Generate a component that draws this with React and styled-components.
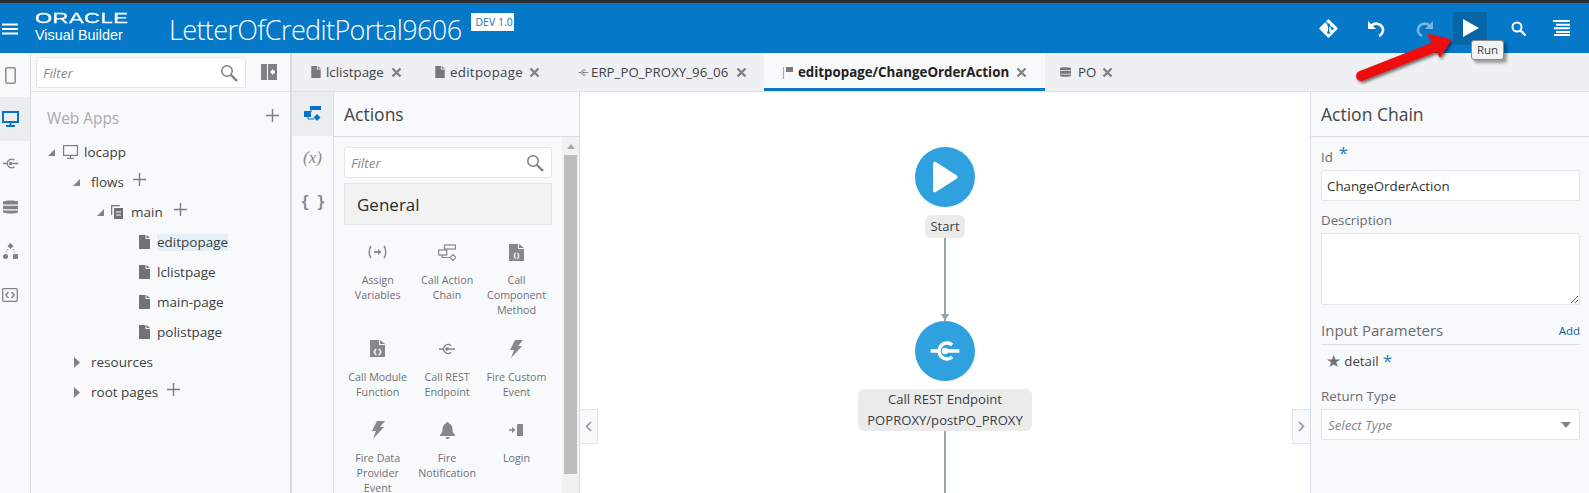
import React from "react";
import styled, { createGlobalStyle } from "styled-components";
import { FaGitAlt } from "react-icons/fa";

const Global = createGlobalStyle`
  html, body { margin: 0; padding: 0; height: 493px; overflow: hidden; background: #fff; }
  body { font-family: "Open Sans", "Noto Sans", sans-serif; color: #333; }
  * { box-sizing: border-box; }
`;

const Page = styled.div`
  width: 1589px; height: 493px; display: flex; flex-direction: column;
  overflow: hidden; position: relative; border-top: 3px solid #2b2f33;
`;

/* header */
const Header = styled.header`
  height: 50px; flex: none; background: #0579c8; display: flex; align-items: center; color: #fff;
  padding-left: 2px;
`;
const Burger = styled.svg`width: 17px; height: 12px; margin-right: 16px; margin-top: 1px;`;
const Logo = styled.div`width: 134px; display: flex; flex-direction: column; font-family: "Liberation Sans", sans-serif; margin-top: -3px;`;
const LogoTop = styled.span`
  font-size: 15px; line-height: 15px; font-weight: 400; letter-spacing: .3px; -webkit-text-stroke: .3px #fff;
  transform: scaleX(1.47); transform-origin: left center; display: block;
`;
const LogoBottom = styled.span`font-size: 14.4px; line-height: 16px; margin-top: 2px;`;
const AppTitle = styled.h1`
  margin: 3px 0 0; font-size: 27px; font-weight: 300; line-height: 40px; letter-spacing: -.62px; white-space: nowrap;
`;
const Badge = styled.span`
  margin: -13px 0 0 10px; background: #fff; color: #1c6fb0; font-size: 10.5px; line-height: 18px; padding: 0 4px; width: 43px; white-space: nowrap;
`;
const HeadActions = styled.div`margin-left: auto; display: flex; align-items: center; height: 100%; padding-right: 10px;`;
const HeadBtn = styled.div`
  width: ${p => p.$w || 48}px; height: 33px; display: flex; align-items: center; justify-content: center;
  border-radius: 2px; background: ${p => (p.$active ? "#0766a8" : "transparent")};
  opacity: ${p => (p.$dim ? 0.45 : 1)}; margin-left: ${p => p.$ml || 0}px;
`;
const Tooltip = styled.div`
  position: absolute; left: 1471px; top: 37px; width: 33px; height: 20px; background: #f3f3f3;
  border: 1px solid #8a8a8a; border-radius: 3px; font-size: 11.5px; line-height: 18px; text-align: center;
  color: #444; box-shadow: 3px 3px 3px rgba(0,0,0,.35);
`;
const ArrowOverlay = styled.svg`position: absolute; left: 1340px; top: 18px; width: 120px; height: 70px; pointer-events: none;`;

/* body */
const Body = styled.div`flex: 1; display: flex; min-height: 0;`;
const Rail = styled.nav`width: 31px; flex: none; background: #f8f9fb; border-right: 1px solid #d6dfe6;`;
const RailBtn = styled.div`
  height: 44px; display: flex; align-items: center; justify-content: center; padding-right: 10px;
  background: ${p => (p.$active ? "#ecedef" : "transparent")}; color: ${p => (p.$active ? "#0572ce" : "#7f8488")};
`;

const TreePanel = styled.aside`width: 261px; flex: none; background: #f8f9fb; border-right: 2px solid #d6dbe0; display: flex; flex-direction: column;`;
const FilterBar = styled.div`height: 39px; flex: none; display: flex; align-items: flex-start; padding: 4px 0 0 5px; border-bottom: 1px solid #dfe4e9;`;
const FilterBox = styled.label`
  display: flex; align-items: center; height: ${p => p.$h || 31}px; width: ${p => p.$w}px; background: #fff;
  border: 1px solid #e4e6e8; border-radius: 2px; padding: 0 7px 0 6px; flex: none; color: #7c8085;
`;
const FilterInput = styled.input`
  flex: 1; min-width: 0; border: 0; outline: 0; background: transparent; font: italic 13.5px "Open Sans", sans-serif; color: #777; padding: 0;
  &::placeholder { color: #85888c; opacity: 1; }
`;
const CollapseIcon = styled.svg`width: 16px; height: 16px; margin: 7px 0 0 15px;`;
const Tree = styled.div`padding: 12px 0 0 16px; position: relative; flex: 1;`;
const TreeHead = styled.div`
  display: flex; justify-content: space-between; align-items: center; height: 28px; margin-bottom: 5px;
  font-size: 15.4px; color: #a9abae; padding-right: 10px;
`;
const TreeRow = styled.div`
  height: 30px; display: flex; align-items: center; padding-left: ${p => p.$indent}px; font-size: 13.5px; color: #3c3f42; white-space: nowrap;
`;
const Twist = styled.svg`width: 9px; height: 11px; flex: none; margin-right: ${p => p.$mr || 10}px;`;
const TreeIcon = styled.svg`flex: none; margin-right: ${p => p.$mr || 6}px; color: #707276;`;
const TreeLabel = styled.span`
  background: ${p => (p.$sel ? "#e3f0f8" : "transparent")}; line-height: 17px;
`;
const PlusBtn = styled.svg`width: 15px; height: 15px; margin-left: ${p => p.$ml || 8}px; color: #7b7e82; flex: none; margin-top: -5px;`;

/* workspace */
const Workspace = styled.main`flex: 1; min-width: 0; display: flex; flex-direction: column;`;
const Tabs = styled.div`height: 39px; flex: none; display: flex; background: #eef0f3; border-bottom: 1px solid #dfe4e9;`;
const Tab = styled.div`
  width: ${p => p.$w}px; display: flex; align-items: center; padding-left: ${p => p.$pl || 19}px; font-size: 13.3px; white-space: nowrap;
  color: ${p => (p.$active ? "#222" : "#3f4246")}; font-weight: ${p => (p.$active ? 700 : 400)};
  background: ${p => (p.$active ? "#f8f9fb" : "transparent")};
  box-shadow: ${p => (p.$active ? "inset 0 -3px 0 #0579c8" : "none")};
`;
const TabIcon = styled.svg`flex: none; margin-right: ${p => p.$mr || 5}px; color: #77797d;`;
const WideName = styled.span`letter-spacing: ${p => p.$ls}px;`;
const TabClose = styled.svg`width: 11px; height: 11px; flex: none; margin-left: ${p => p.$ml || 7}px; color: #7f8285;`;

const Split = styled.div`flex: 1; display: flex; min-height: 0;`;
const PaletteTabs = styled.div`width: 42px; flex: none; background: #f8f9fb; border-right: 1px solid #d6dfe6;`;
const PaletteTab = styled.div`
  height: 44px; display: flex; align-items: center; justify-content: center; color: ${p => (p.$active ? "#0572ce" : "#85888c")};
  background: ${p => (p.$active ? "#ecedef" : "transparent")}; font: 400 17px "Liberation Serif", serif;
`;
const Braces = styled(PaletteTab)`font: 700 15px "DejaVu Sans Mono", monospace; letter-spacing: -1px;`;
const ActionsPanel = styled.section`width: 246px; flex: none; background: #f8f9fb; border-right: 1px solid #d6dfe6; display: flex; flex-direction: column; min-height: 0;`;
const PanelTitle = styled.div`
  height: 45px; flex: none; border-bottom: 1px solid #d6dfe6; font-size: 17.5px; color: #444; padding-left: 10px; display: flex; align-items: center;
`;
const ActionsBody = styled.div`flex: 1; display: flex; min-height: 0;`;
const ActionsContent = styled.div`flex: 1; min-width: 0; padding: 10px 10px 0 10px; overflow: hidden;`;
const Accordion = styled.div`
  margin-top: 5px; height: 42px; width: 208px; background: #f2f2f2; border: 1px solid #e3e4e6; display: flex; align-items: center; padding-left: 12px; font-size: 17px; color: #2a2a2a;
`;
const PaletteGrid = styled.div`display: grid; grid-template-columns: repeat(3, 69.4px); row-gap: 18.5px; margin-top: 15px; width: 208px; margin-left: -1px;`;
const PaletteItem = styled.div`display: flex; flex-direction: column; align-items: center; text-align: center; color: #6f7276;`;
const PaletteIcon = styled.div`height: 24px; display: flex; align-items: center; justify-content: center; margin-bottom: 9px; color: #85888c;`;
const PaletteLabel = styled.div`font-size: 10.7px; line-height: 15px; white-space: pre-line;`;
const Scrollbar = styled.div`width: 17px; flex: none; background: #f1f1f1; display: flex; flex-direction: column; align-items: center;`;
const ScrollUp = styled.div`height: 18px; flex: none; padding-top: 7px; &::before { content: ""; display: block; border: 4px solid transparent; border-top: 0; border-bottom: 5px solid #a8a8a8; }`;
const ScrollThumb = styled.div`width: 13px; height: 319px; background: #bdbdbd; flex: none;`;

const Canvas = styled.section`flex: 1; min-width: 0; background: #fff; display: flex; flex-direction: column; align-items: center; padding-top: 55px; overflow: hidden; position: relative;`;
const NodeCircle = styled.div`width: 60px; height: 60px; flex: none; border-radius: 50%; background: #30a1df; display: flex; align-items: center; justify-content: center;`;
const NodeLabel = styled.div`
  margin-top: 8px; background: #ebebeb; border-radius: 6px; padding: 0 ${p => p.$px || 5}px; font-size: 13.1px; line-height: ${p => p.$lh || 23}px; text-align: center; color: #3b3d40; white-space: pre-line; flex: none;
`;
const Connector = styled.div`
  width: 2px; height: ${p => p.$h}px; background: #98a4ae; flex: none; position: relative;
  &::after { content: ""; position: absolute; left: -3px; bottom: 0; border: 4px solid transparent; border-bottom: 0; border-top: 7px solid #98a4ae; }
`;
const Gutter = styled.div`
  position: absolute; top: 317px; width: 18px; height: 35px; background: #f8f9fb; border: 1px solid #e2e5e8; color: #909397; display: flex; align-items: center; justify-content: center;
  ${p => (p.$right ? "right: 0; border-right: 0;" : "left: 0; border-left: 0;")}
`;

const PropsPanel = styled.aside`width: 279px; flex: none; background: #f8f9fb; border-left: 1px solid #d6dfe6; display: flex; flex-direction: column;`;
const PropsBody = styled.div`padding: 10px 9px 0 10px;`;
const FieldLabel = styled.div`font-size: 13.3px; line-height: 20px; color: #6a6d70; margin-top: ${p => p.$mt || 0}px; height: 20px;`;
const Required = styled.span`color: #2a78c0; font-size: 17px; line-height: 0; margin-left: ${p => p.$ml || 6}px; vertical-align: 3px;`;
const TextField = styled.input`
  display: block; width: 259px; height: 31px; margin-top: 3px; border: 1px solid #e4e6e8; border-radius: 2px; background: #fff; padding: 0 5px;
  font: 13.3px "Open Sans", sans-serif; color: #333; outline: 0;
`;
const TextArea = styled.textarea`
  display: block; width: 259px; height: 72px; margin-top: 3px; border: 1px solid #e4e6e8; border-radius: 2px; background: #fff; outline: 0; resize: both;
`;
const SectionRow = styled.div`display: flex; justify-content: space-between; align-items: center; height: 27px; margin-top: 13px; border-bottom: 1px solid #d6dfe6; padding-bottom: 2px;`;
const SectionTitle = styled.span`font-size: 15px; color: #6a6d70;`;
const AddLink = styled.span`font-size: 11.5px; color: #145c9e;`;
const ParamRow = styled.div`height: 34px; display: flex; align-items: center; padding-left: 5px; font-size: 13.3px; color: #444; padding-bottom: 2px;`;
const ParamStar = styled.span`color: #707276; font-size: 17px; margin-right: 3px; font-family: "DejaVu Sans", sans-serif;`;
const SelectBox = styled(FilterBox)`width: 259px; margin-top: 3px; padding: 0 6px;`;
const SelectText = styled.span`font: italic 13.3px "Open Sans", sans-serif; color: #85888c; flex: 1;`;
const Caret = styled.span`border: 5px solid transparent; border-bottom: 0; border-top: 6px solid #808285; margin-right: 2px;`;

/* icons */
const Plus = ({ $ml }) => (
  <PlusBtn $ml={$ml} viewBox="0 0 15 15"><path d="M7.5 1v13M1 7.5h13" stroke="currentColor" strokeWidth="1.4" /></PlusBtn>
);
const Down = () => <Twist viewBox="0 0 9 11"><path d="M8 2v7H1z" fill="#808285" /></Twist>;
const Right = () => <Twist viewBox="0 0 9 11"><path d="M2 0l6 5.5L2 11z" fill="#808285" /></Twist>;
const PageGlyph = ({ w = 11, h = 14, mr }) => (
  <TreeIcon $mr={mr} width={w} height={h} viewBox="0 0 11 14"><path d="M0 0h6.5v4H11v10H0zM7.5 0L11 3H7.5z" fill="currentColor" /></TreeIcon>
);
const TabPage = () => (
  <TabIcon width="10" height="12" viewBox="0 0 11 14"><path d="M0 0h6.5v4H11v10H0zM7.5 0L11 3H7.5z" fill="currentColor" /></TabIcon>
);
const X = ({ ml }) => <TabClose $ml={ml} viewBox="0 0 11 11"><path d="M1.5 1.5l8 8M9.5 1.5l-8 8" stroke="currentColor" strokeWidth="2.4" /></TabClose>;
const Mag = ({ size = 18 }) => (
  <svg width={size} height={size} viewBox="0 0 18 18" fill="none"><circle cx="7" cy="7" r="5.2" stroke="#7c8085" strokeWidth="1.5" /><path d="M11 11l6 6" stroke="#7c8085" strokeWidth="2.4" /></svg>
);
const RestPaths = ({ color = "currentColor", sw = 1.6 }) => (
  <>
    <path d="M14.5 6.2A5 5 0 1 0 14.5 13.8" stroke={color} strokeWidth={sw} fill="none" /><circle cx="10" cy="10" r="2" fill={color} />
    <path d="M1 10h5M10 10h9" stroke={color} strokeWidth={sw} fill="none" />
  </>
);
const RestGlyph = ({ size = 18, color, sw }) => (
  <svg width={size} height={size} viewBox="0 0 20 20"><RestPaths color={color} sw={sw} /></svg>
);
const ChainGlyph = () => (
  <svg width="18" height="17" viewBox="0 0 18 17" fill="none" stroke="currentColor" strokeWidth="1.2">
    <rect x="6.5" y="1" width="11" height="4" /><rect x=".7" y="6" width="8" height="5" /><path d="M8.5 5v1M4 11v2.5h8" /><path d="M15 10.5l3 3-3 3-3-3z" />
  </svg>
);
const CodeDoc = ({ glyph }) => (
  <svg width="15" height="17" viewBox="0 0 15 17"><path d="M0 0h9v5h6v12H0zM10 0l5 4h-5z" fill="currentColor" /><text x="7.5" y="14" fontSize="7" fontWeight="700" fill="#fff" textAnchor="middle" fontFamily="DejaVu Sans">{glyph}</text></svg>
);
const Bolt = () => (
  <svg width="14" height="18" viewBox="0 0 14 18"><path d="M6 0h8L9 6h4L2 18l3-8H1z" fill="currentColor" /></svg>
);
const ActionChainIcon = () => (
  <svg width="17" height="16" viewBox="0 0 17 16" fill="currentColor"><rect x="6" y="0" width="11" height="4" /><rect x="0" y="5" width="7" height="6" /><path d="M7 3v3M4 11v2h6" stroke="currentColor" fill="none" /><path d="M13 8l3.5 3.5L13 15l-3.5-3.5z" /></svg>
);

export default function App() {
  return (
    <Page>
      <Global />
      <Header>
        <Burger viewBox="0 0 17 12"><path d="M0 1.5h16M0 6h16M0 10.5h16" stroke="#fff" strokeWidth="1.8" /></Burger>
        <Logo>
          <LogoTop>ORACLE</LogoTop>
          <LogoBottom>Visual Builder</LogoBottom>
        </Logo>
        <AppTitle>LetterOfCreditPortal9606</AppTitle>
        <Badge>DEV 1.0</Badge>
        <HeadActions>
          <HeadBtn><FaGitAlt size={21} color="#fff" /></HeadBtn>
          <HeadBtn>
            <svg width="19" height="17" viewBox="0 0 19 17" fill="none"><path d="M1 1v8h8z" fill="#fff" /><path d="M4 6a7 7 0 0 1 11.5 1.5C17 11 15 14.5 12 16" stroke="#fff" strokeWidth="2.6" /></svg>
          </HeadBtn>
          <HeadBtn $dim>
            <svg width="19" height="17" viewBox="0 0 19 17" fill="none"><path d="M18 1v8h-8z" fill="#fff" /><path d="M15 6A7 7 0 0 0 3.5 7.5C2 11 4 14.5 7 16" stroke="#fff" strokeWidth="2.6" /></svg>
          </HeadBtn>
          <HeadBtn $active $w={34} $ml={5}>
            <svg width="17" height="18" viewBox="0 0 17 18"><path d="M1 0l16 9-16 9z" fill="#fff" /></svg>
          </HeadBtn>
          <HeadBtn $w={49} $ml={7}>
            <svg width="15" height="15" viewBox="0 0 15 15" fill="none"><circle cx="6" cy="6" r="4.5" stroke="#fff" strokeWidth="2" /><path d="M9.5 9.5l5 5" stroke="#fff" strokeWidth="2.4" /></svg>
          </HeadBtn>
          <HeadBtn $w={36}>
            <svg width="17" height="16" viewBox="0 0 17 16"><path d="M0 1h17M3 4.7h14M1 8.3h16M3 12h14M1 15h16" stroke="#fff" strokeWidth="1.9" /></svg>
          </HeadBtn>
        </HeadActions>
      </Header>

      <Body>
        <Rail>
          <RailBtn>
            <svg width="11" height="17" viewBox="0 0 11 17" fill="none"><rect x=".8" y=".8" width="9.4" height="15.4" rx="1.5" stroke="#9a8f86" strokeWidth="1.6" /></svg>
          </RailBtn>
          <RailBtn $active>
            <svg width="17" height="16" viewBox="0 0 17 16" fill="none"><rect x="1" y="1" width="15" height="10" stroke="#0572ce" strokeWidth="2" /><path d="M8.5 11v3M4 15h9" stroke="#0572ce" strokeWidth="1.8" /></svg>
          </RailBtn>
          <RailBtn><RestGlyph size={17} /></RailBtn>
          <RailBtn>
            <svg width="15" height="16" viewBox="0 0 15 16" fill="#7f8488"><path d="M0 3c0-2 15-2 15 0v2.5H0zM0 6.7h15v3.6H0zM0 11.5h15V13c0 2-15 2-15 0z" /></svg>
          </RailBtn>
          <RailBtn>
            <svg width="15" height="17" viewBox="0 0 15 17" fill="#7f8488"><path d="M7.5 0l3 3-3 3-3-3z" /><circle cx="2.5" cy="13.5" r="2.5" /><rect x="10" y="11" width="5" height="5" rx="1" /><path d="M5 6l-2 4M10 6l2 4" stroke="#7f8488" strokeDasharray="1.4 1.2" fill="none" /></svg>
          </RailBtn>
          <RailBtn>
            <svg width="16" height="14" viewBox="0 0 16 14" fill="none" stroke="#7f8488"><rect x=".7" y=".7" width="14.6" height="12.6" rx="1" strokeWidth="1.3" /><path d="M6.5 4L3.8 7l2.7 3M9.5 4l2.7 3-2.7 3" strokeWidth="1.4" /></svg>
          </RailBtn>
        </Rail>

        <TreePanel>
          <FilterBar>
            <FilterBox $w={210}>
              <FilterInput placeholder="Filter" readOnly />
              <Mag />
            </FilterBox>
            <CollapseIcon viewBox="0 0 16 16"><path d="M0 0h6v16H0zM7 0h9v16H7z" fill="#808285" /><path d="M9 8l3-3v6z" fill="#fff" /><rect x="11" y="6.5" width="3" height="3" fill="#fff" /></CollapseIcon>
          </FilterBar>
          <Tree>
            <TreeHead>Web Apps <PlusBtn viewBox="0 0 15 15"><path d="M7.5 1v13M1 7.5h13" stroke="currentColor" strokeWidth="1.4" /></PlusBtn></TreeHead>
            <TreeRow $indent={0}>
              <Twist viewBox="0 0 9 11" $mr={7}><path d="M8 2v7H1z" fill="#808285" /></Twist>
              <TreeIcon $mr={6} width="15" height="14" viewBox="0 0 15 14" fill="none"><rect x=".6" y=".6" width="13.8" height="9.8" stroke="currentColor" strokeWidth="1.1" /><path d="M7.5 10.5v2.5M4 13.2h7" stroke="currentColor" strokeWidth="1.1" /></TreeIcon>
              <TreeLabel>locapp</TreeLabel>
            </TreeRow>
            <TreeRow $indent={25}><Down /><TreeLabel>flows</TreeLabel><Plus $ml={8} /></TreeRow>
            <TreeRow $indent={49}>
              <Twist viewBox="0 0 9 11" $mr={6}><path d="M8 2v7H1z" fill="#808285" /></Twist>
              <TreeIcon $mr={8} width="12" height="14" viewBox="0 0 12 14" fill="none"><path d="M.7 10V.7h8" stroke="currentColor" strokeWidth="1.2" /><rect x="3" y="3" width="9" height="11" fill="currentColor" /><path d="M5 7h5M5 10h5" stroke="#f8f9fb" /></TreeIcon>
              <TreeLabel>main</TreeLabel><Plus $ml={10} />
            </TreeRow>
            <TreeRow $indent={92}><PageGlyph mr={7} /><TreeLabel $sel>editpopage</TreeLabel></TreeRow>
            <TreeRow $indent={92}><PageGlyph mr={7} /><TreeLabel>lclistpage</TreeLabel></TreeRow>
            <TreeRow $indent={92}><PageGlyph mr={7} /><TreeLabel>main-page</TreeLabel></TreeRow>
            <TreeRow $indent={92}><PageGlyph mr={7} /><TreeLabel>polistpage</TreeLabel></TreeRow>
            <TreeRow $indent={25}><Right /><TreeLabel>resources</TreeLabel></TreeRow>
            <TreeRow $indent={25}><Right /><TreeLabel>root pages</TreeLabel><Plus $ml={8} /></TreeRow>
          </Tree>
        </TreePanel>

        <Workspace>
          <Tabs>
            <Tab $w={124}><TabPage />lclistpage<X /></Tab>
            <Tab $w={143}><TabPage /><WideName $ls={0.3}>editpopage</WideName><X ml={6} /></Tab>
            <Tab $w={205}><TabIcon $mr={2} width="11" height="11" viewBox="0 0 20 20"><RestPaths /></TabIcon><WideName $ls={0}>ERP_PO_PROXY_96_06</WideName><X ml={8} /></Tab>
            <Tab $w={281} $active $pl={18}>
              <TabIcon width="11" height="13" viewBox="0 0 11 13"><path d="M4 1h7v5H4z" fill="currentColor" /><path d="M1.5 1v12" stroke="#c9a0a0" strokeWidth="1.2" /></TabIcon>
              editpopage/ChangeOrderAction<X />
            </Tab>
            <Tab $w={90} $pl={15}>
              <TabIcon $mr={7} width="11" height="12" viewBox="0 0 15 16" fill="currentColor"><path d="M0 3c0-2 15-2 15 0v2.5H0zM0 6.7h15v3.6H0zM0 11.5h15V13c0 2-15 2-15 0z" /></TabIcon>
              PO<X ml={6} />
            </Tab>
          </Tabs>
          <Split>
            <PaletteTabs>
              <PaletteTab $active><ActionChainIcon /></PaletteTab>
              <PaletteTab><i>(x)</i></PaletteTab>
              <Braces>{"{ }"}</Braces>
            </PaletteTabs>
            <ActionsPanel>
              <PanelTitle>Actions</PanelTitle>
              <ActionsBody>
                <ActionsContent>
                  <FilterBox $w={208}>
                    <FilterInput placeholder="Filter" readOnly />
                    <Mag />
                  </FilterBox>
                  <Accordion>General</Accordion>
                  <PaletteGrid>
                    <PaletteItem><PaletteIcon><svg width="19" height="14" viewBox="0 0 19 14" fill="none" stroke="currentColor" strokeWidth="1.5"><path d="M3 1C.7 4 .7 10 3 13M16 1c2.3 3 2.3 9 0 12" /><path d="M6 7h5" strokeWidth="1.8" /><path d="M10 4l3.5 3L10 10z" fill="currentColor" stroke="none" /></svg></PaletteIcon><PaletteLabel>{"Assign\nVariables"}</PaletteLabel></PaletteItem>
                    <PaletteItem><PaletteIcon><ChainGlyph /></PaletteIcon><PaletteLabel>{"Call Action\nChain"}</PaletteLabel></PaletteItem>
                    <PaletteItem><PaletteIcon><CodeDoc glyph="()" /></PaletteIcon><PaletteLabel>{"Call\nComponent\nMethod"}</PaletteLabel></PaletteItem>
                    <PaletteItem><PaletteIcon><CodeDoc glyph="{}" /></PaletteIcon><PaletteLabel>{"Call Module\nFunction"}</PaletteLabel></PaletteItem>
                    <PaletteItem><PaletteIcon><RestGlyph size={18} /></PaletteIcon><PaletteLabel>{"Call REST\nEndpoint"}</PaletteLabel></PaletteItem>
                    <PaletteItem><PaletteIcon><Bolt /></PaletteIcon><PaletteLabel>{"Fire Custom\nEvent"}</PaletteLabel></PaletteItem>
                    <PaletteItem><PaletteIcon><Bolt /></PaletteIcon><PaletteLabel>{"Fire Data\nProvider\nEvent"}</PaletteLabel></PaletteItem>
                    <PaletteItem><PaletteIcon><svg width="15" height="17" viewBox="0 0 15 17" fill="currentColor"><path d="M7.5 0c1 0 1.4.7 1.4 1.5C11.5 2.2 12.5 4.5 12.5 7.500c0 2.500.8 4 2.500 5.500v1H0v-1c1.700-1.500 2.500-3 2.500-5.500 0-3 1-5.300 3.600-6C6.100.7 6.500 0 7.500 0zM5.500 15h4c0 1-1 2-2 2s-2-1-2-2z" /></svg></PaletteIcon><PaletteLabel>{"Fire\nNotification"}</PaletteLabel></PaletteItem>
                    <PaletteItem><PaletteIcon><svg width="14" height="12" viewBox="0 0 14 12" fill="currentColor"><path d="M8 0h6v12H8zM0 5.200h3V3l3.500 3L3 9V6.800H0z" /></svg></PaletteIcon><PaletteLabel>Login</PaletteLabel></PaletteItem>
                  </PaletteGrid>
                </ActionsContent>
                <Scrollbar><ScrollUp /><ScrollThumb /></Scrollbar>
              </ActionsBody>
            </ActionsPanel>
            <Canvas>
              <NodeCircle>
                <svg width="28" height="32" viewBox="0 0 28 32"><path d="M2 2.500c0-1.500 1.500-2.300 2.800-1.500l21 13.500c1.100.7 1.100 2.300 0 3L4.800 31c-1.300.8-2.800 0-2.800-1.500z" fill="#fff" /></svg>
              </NodeCircle>
              <NodeLabel>Start</NodeLabel>
              <Connector $h={83} />
              <NodeCircle><RestGlyph size={32} color="#fff" sw={2.1} /></NodeCircle>
              <NodeLabel $px={9} $lh={21}>{"Call REST Endpoint\nPOPROXY/postPO_PROXY"}</NodeLabel>
              <Connector $h={70} />
              <Gutter><svg width="7" height="11" viewBox="0 0 7 11" fill="none"><path d="M6 1L1.500 5.500 6 10" stroke="currentColor" strokeWidth="1.5" /></svg></Gutter>
              <Gutter $right><svg width="7" height="11" viewBox="0 0 7 11" fill="none"><path d="M1 1l4.500 4.500L1 10" stroke="currentColor" strokeWidth="1.5" /></svg></Gutter>
            </Canvas>
            <PropsPanel>
              <PanelTitle>Action Chain</PanelTitle>
              <PropsBody>
                <FieldLabel>Id<Required>*</Required></FieldLabel>
                <TextField value="ChangeOrderAction" readOnly />
                <FieldLabel $mt={9}>Description</FieldLabel>
                <TextArea readOnly />
                <SectionRow><SectionTitle>Input Parameters</SectionTitle><AddLink>Add</AddLink></SectionRow>
                <ParamRow><ParamStar>★</ParamStar>detail<Required $ml={4}>*</Required></ParamRow>
                <FieldLabel $mt={7}>Return Type</FieldLabel>
                <SelectBox><SelectText>Select Type</SelectText><Caret /></SelectBox>
              </PropsBody>
            </PropsPanel>
          </Split>
        </Workspace>
      </Body>

      <ArrowOverlay viewBox="0 0 120 70">
        <defs><filter id="s" x="-20%" y="-20%" width="150%" height="170%"><feDropShadow dx="1.500" dy="2" stdDeviation="1.500" floodColor="#000" floodOpacity=".55" /></filter></defs>
        <g filter="url(#s)" fill="#ee1111">
          <path d="M21 55L95 26" stroke="#ee1111" strokeWidth="10" strokeLinecap="round" />
          <path d="M89 14L110 19L100 35z" stroke="#ee1111" strokeWidth="2" strokeLinejoin="round" />
        </g>
      </ArrowOverlay>
      <Tooltip>Run</Tooltip>
    </Page>
  );
}
